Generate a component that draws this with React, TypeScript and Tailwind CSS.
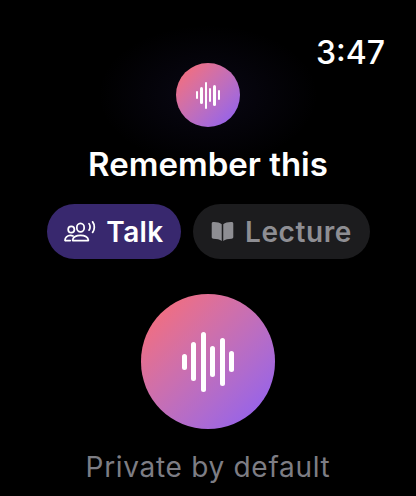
const bigBars = ['h-[16px]', 'h-[39px]', 'h-[60px]', 'h-[31px]', 'h-[48px]', 'h-[21px]']
const smallBars = ['h-[8px]', 'h-[17px]', 'h-[27px]', 'h-[14px]', 'h-[21px]', 'h-[10px]']

function TalkIcon() {
  return (
    <svg viewBox="0 0 34 22" className="w-[33px] h-[22px]" fill="none" stroke="currentColor" strokeWidth="1.8" strokeLinecap="round" strokeLinejoin="round">
      <circle cx="7.500" cy="8.500" r="3.200" />
      <path d="M1.200 19.700c-.5-3 2.400-5.200 5.400-5.200 1 0 1.900.2 2.700.6" />
      <path d="M1.400 19.800h5" />
      <ellipse cx="17" cy="6.500" rx="3.800" ry="4.300" />
      <path d="M9.600 20c-.5 0-.9-.5-.7-1.100.8-2.900 4-4.500 8.100-4.500s7.300 1.600 8.100 4.500c.2.600-.2 1.100-.7 1.100z" />
      <path d="M25.800 2.500c1.400 1.600 1.400 5 0 6.600" />
      <path d="M29.500 .6c2.300 2.900 2.300 8 0 10.800" />
    </svg>
  )
}

function BookIcon() {
  return (
    <svg viewBox="0 0 24 22" className="w-[23px] h-[21px]" fill="currentColor">
      <path d="M11.200 3.500C9.200 1.700 6.200 .9 2.500 1 1.400 1 .7 1.700 .7 2.700v14.100c0 1 .7 1.700 1.800 1.700 3.500 0 6.700.7 8.700 2.500z" />
      <path d="M12.800 3.500c2-1.800 5-2.600 8.700-2.500 1.100 0 1.800.7 1.800 1.700v14.100c0 1-.7 1.700-1.800 1.700-3.500 0-6.700.7-8.700 2.500z" />
    </svg>
  )
}

export default function App() {
  return (
    <div className="relative w-[416px] h-[496px] overflow-hidden bg-black text-white font-['Inter',sans-serif] flex flex-col items-center">
      <div className="absolute left-[98px] top-[25px] w-[220px] h-[140px] bg-[radial-gradient(closest-side,rgba(90,70,200,0.1),rgba(0,0,0,0))]" />

      <div className="relative w-full flex justify-end pr-[31px] pt-[34px] h-[63px]">
        <span className="text-[32px] leading-[38px] font-medium">3:47</span>
      </div>

      <div className="relative w-[64px] h-[64px] rounded-full bg-gradient-to-br from-[#ff6b6b] to-[#8b5cf6] flex items-center justify-center gap-[2px]">
        {smallBars.map((h, i) => (
          <div key={i} className={`w-[2.4px] rounded-full bg-white ${h}`} />
        ))}
      </div>

      <h1 className="relative mt-[19px] text-[33px] leading-[36px] font-semibold">Remember this</h1>

      <div className="relative mt-[22px] flex gap-[12px] pl-px">
        <div className="h-[55px] w-[134px] rounded-full bg-[#38286e] flex items-center justify-center gap-[9px]">
          <TalkIcon />
          <span className="pt-px text-[28px] tracking-[0.4px] font-semibold">Talk</span>
        </div>
        <div className="h-[55px] w-[177px] rounded-full bg-[#1c1c1e] text-[#8e8e93] flex items-center justify-center gap-[11px]">
          <BookIcon />
          <span className="pt-px text-[28px] tracking-[0.6px] font-semibold">Lecture</span>
        </div>
      </div>

      <div className="relative mt-[35px] w-[134px] h-[135px] rounded-full bg-gradient-to-br from-[#ff6b6b] to-[#8b5cf6] flex items-center justify-center gap-[4.600px]">
        {bigBars.map((h, i) => (
          <div key={i} className={`w-[5px] rounded-full bg-white ${h}`} />
        ))}
      </div>

      <p className="relative mt-[21px] text-[28px] leading-[34px] tracking-[0.7px] text-[#7d7d84]">Private by default</p>
    </div>
  )
}
